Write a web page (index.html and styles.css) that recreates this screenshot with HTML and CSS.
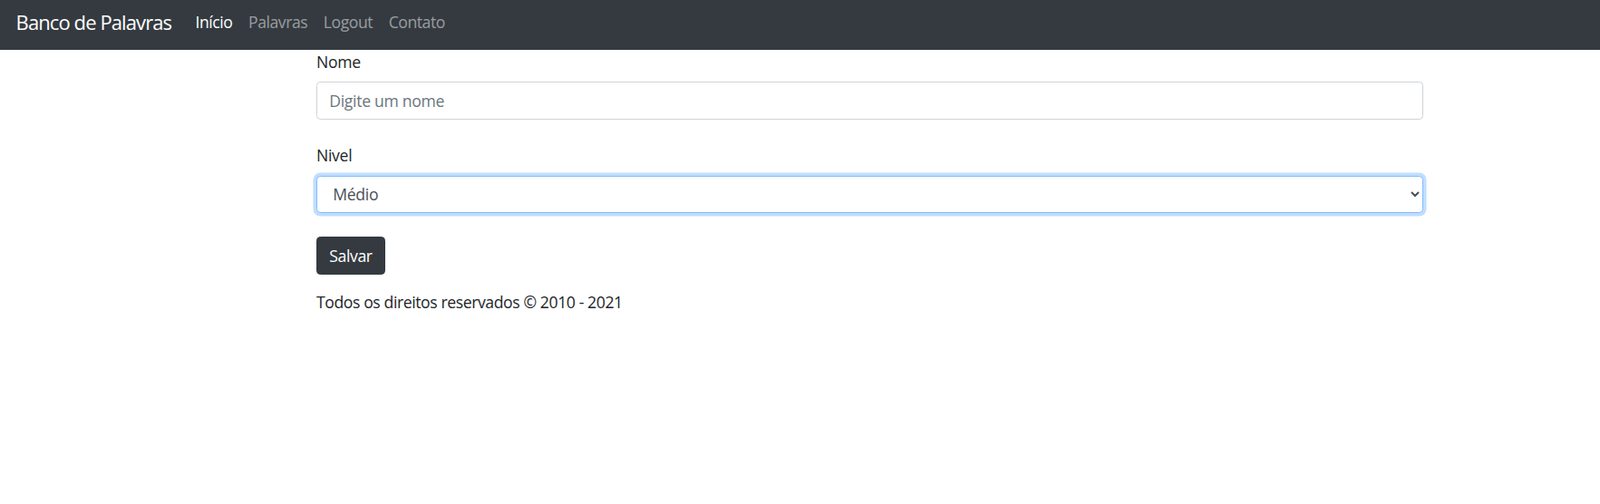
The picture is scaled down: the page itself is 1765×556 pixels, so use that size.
FILE: index.html
```html
<!DOCTYPE html>
<html lang="pt-BR">
<head>
<meta charset="utf-8">
<title>Banco de Palavras</title>
<link rel="stylesheet" href="styles.css">
</head>
<body>
<nav class="navbar">
  <a class="brand" href="#">Banco de Palavras</a>
  <ul class="nav">
    <li><a class="nav-link active" href="#">Início</a></li>
    <li><a class="nav-link" href="#">Palavras</a></li>
    <li><a class="nav-link" href="#">Logout</a></li>
    <li><a class="nav-link" href="#">Contato</a></li>
  </ul>
</nav>
<main class="container">
  <form class="form">
    <div class="group">
      <label class="label" for="nome">Nome</label>
      <input class="control" id="nome" type="text" placeholder="Digite um nome">
    </div>
    <div class="group">
      <label class="label" for="nivel">Nivel</label>
      <select class="control select focused" id="nivel">
        <option>Fácil</option>
        <option selected>Médio</option>
        <option>Difícil</option>
      </select>
    </div>
    <button class="btn" type="button">Salvar</button>
  </form>
  <p class="footer">Todos os direitos reservados © 2010 - 2021</p>
</main>
</body>
</html>
```
FILE: styles.css
```css
* { box-sizing: border-box; }
html, body { margin: 0; padding: 0; }
body {
  font-family: "Open Sans", "Noto Sans", "Liberation Sans", sans-serif;
  font-size: 17.6px;
  line-height: 26.4px;
  color: #212529;
  background: #fff;
}
.navbar {
  display: flex;
  align-items: flex-start;
  height: 55px;
  padding: 0 17.6px;
  background: #343a40;
}
.brand {
  font-size: 22px;
  line-height: 48px;
  color: #fff;
  text-decoration: none;
  margin-right: 17.6px;
  letter-spacing: -0.9px;
}
.nav {
  display: flex;
  list-style: none;
  margin: 0;
  padding: 0;
}
.nav-link {
  display: block;
  padding: 0 8.8px;
  line-height: 48px;
  color: rgba(255, 255, 255, 0.5);
  text-decoration: none;
  letter-spacing: -0.45px;
}
.nav-link.active { color: #fff; }
.container {
  width: 1221px;
  margin-left: 349px;
}
.form { margin: 0; }
.group { margin-bottom: 26.4px; }
.label {
  display: block;
  margin-bottom: 8.8px;
  letter-spacing: -0.3px;
}
.control {
  display: block;
  width: 100%;
  height: 41.8px;
  padding: 6.6px 13.2px;
  font-family: inherit;
  font-size: 17.6px;
  line-height: 26.4px;
  color: #495057;
  background: #fff;
  border: 1px solid #ced4da;
  border-radius: 4.4px;
  outline: none;
  letter-spacing: -0.3px;
}
.control::placeholder { color: #6c757d; opacity: 1; }
.select.focused {
  border-color: #80bdff;
  box-shadow: 0 0 0 3.5px rgba(0, 123, 255, 0.25);
}
.btn {
  display: block;
  height: 41.8px;
  padding: 6.6px 13.2px;
  font-family: inherit;
  font-size: 17.6px;
  line-height: 26.4px;
  color: #fff;
  background: #343a40;
  border: 1px solid #343a40;
  border-radius: 4.4px;
  margin-top: -0.8px;
  margin-bottom: 17.6px;
  letter-spacing: -0.35px;
}
.footer {
  margin: 0;
  letter-spacing: -0.4px;
}
```
